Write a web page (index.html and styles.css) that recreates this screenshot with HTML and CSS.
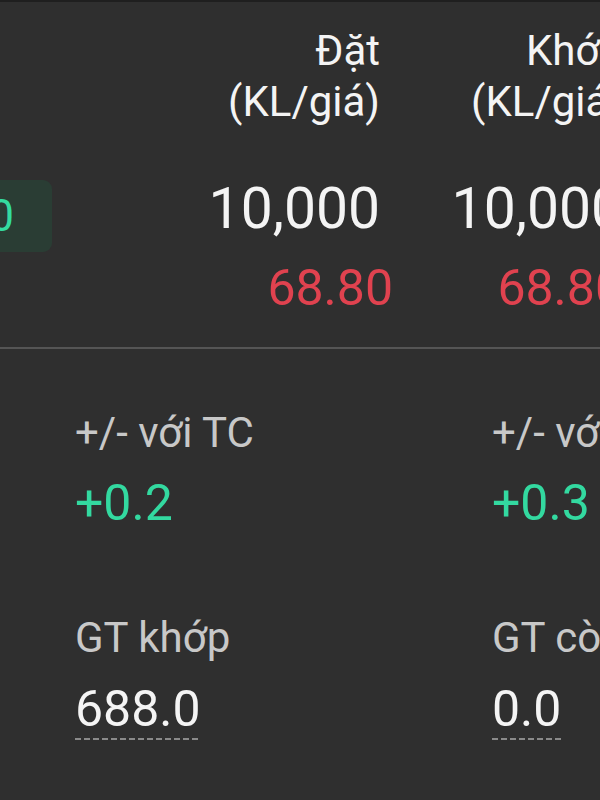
FILE: index.html
```html
<!DOCTYPE html>
<html lang="vi">
<head>
<meta charset="utf-8">
<link rel="stylesheet" href="styles.css">
</head>
<body>
<div class="screen">
  <section class="top">
    <div class="badge-col">
      <div class="badge">+10.0</div>
    </div>
    <div class="col col1">
      <div class="head">Đặt<br>(KL/giá)</div>
      <div class="qty">10,000</div>
      <div class="price price-shift">68.80</div>
    </div>
    <div class="col col2">
      <div class="head">Khớp<br>(KL/giá)</div>
      <div class="qty">10,000</div>
      <div class="price">68.80</div>
    </div>
  </section>
  <hr class="divider">
  <section class="stats">
    <div class="stat">
      <div class="label">+/- với TC</div>
      <div class="up">+0.2</div>
      <div class="label label2">GT khớp</div>
      <div class="val"><span class="dotted">688.0</span></div>
    </div>
    <div class="stat">
      <div class="label">+/- với TC</div>
      <div class="up">+0.3</div>
      <div class="label label2">GT còn lại</div>
      <div class="val"><span class="dotted">0.0</span></div>
    </div>
  </section>
</div>
</body>
</html>
```

FILE: styles.css
```css
html, body {
  margin: 0;
  padding: 0;
  background: #2f2f2f;
}
body {
  width: 600px;
  height: 800px;
  overflow: hidden;
  font-family: Roboto, "Noto Sans", sans-serif;
}
.screen {
  border-top: 2px solid #1f1f1f;
  width: 600px;
  height: 798px;
  overflow: hidden;
}
.top {
  display: flex;
  padding-top: 23px;
}
.badge-col {
  width: 52px;
  flex-shrink: 0;
}
.badge {
  margin-top: 155px;
  margin-left: -110px;
  width: 162px;
  height: 72px;
  box-sizing: border-box;
  padding-right: 38px;
  border-radius: 9px;
  background: #2a3d34;
  color: #34dca0;
  font-size: 44px;
  line-height: 72px;
  text-align: right;
  white-space: nowrap;
}
.col {
  flex-shrink: 0;
  text-align: right;
  color: #f4f4f4;
}
.col1 { width: 328px; }
.col2 { width: 243px; }
.head {
  font-size: 42px;
  line-height: 51px;
  white-space: nowrap;
}
.qty {
  margin-top: 50px;
  font-size: 57px;
  line-height: 64px;
  white-space: nowrap;
}
.price {
  margin-top: 17px;
  font-size: 50px;
  line-height: 60px;
  color: #e0424f;
  white-space: nowrap;
}
.price-shift { margin-right: -13px; }
.divider {
  margin: 29px 0 0 0;
  border: 0;
  height: 2px;
  background: #555555;
}
.stats {
  display: grid;
  grid-template-columns: 417px 417px;
  padding-left: 75px;
  padding-top: 59px;
}
.stat { white-space: nowrap; }
.label {
  font-size: 42px;
  line-height: 50px;
  color: #c8c8c8;
}
.label2 { margin-top: 81px; }
.up {
  margin-top: 16px;
  font-size: 50px;
  line-height: 58px;
  color: #33d9a0;
}
.val {
  margin-top: 17px;
  font-size: 50px;
  line-height: 58px;
  color: #f4f4f4;
}
.dotted {
  display: inline-block;
  position: relative;
}
.dotted::after {
  content: "";
  position: absolute;
  left: 0;
  right: 0;
  bottom: -2px;
  height: 2px;
  background: repeating-linear-gradient(to right, #8a8a8a 0 6px, transparent 6px 9px);
}
```
